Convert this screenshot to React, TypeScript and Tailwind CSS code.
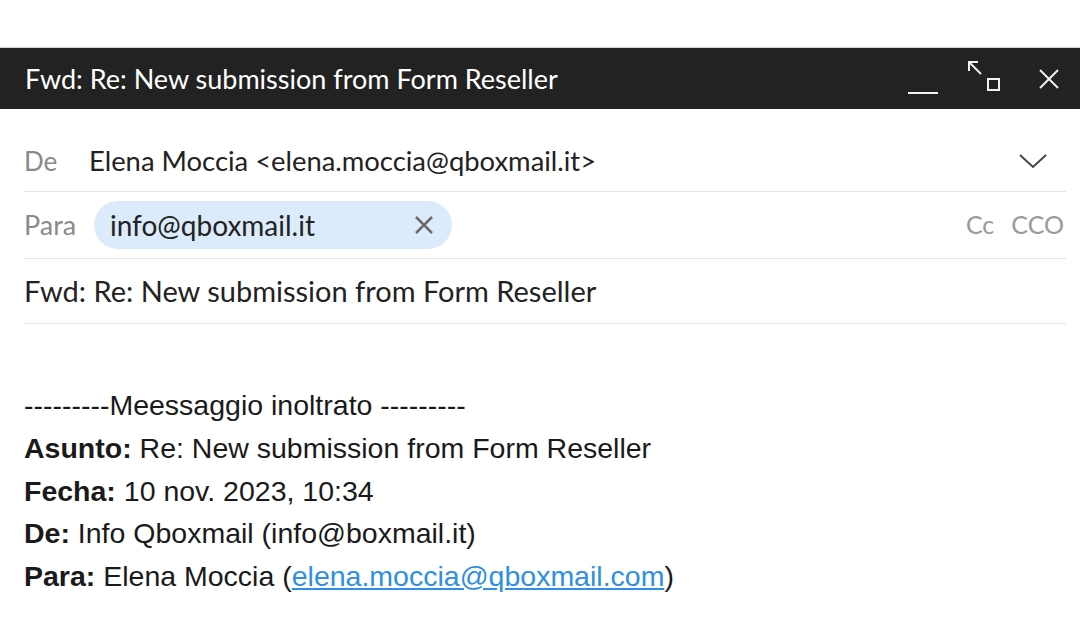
import React from "react";

const ui = { fontFamily: "Lato, 'Noto Sans', sans-serif" };
const body = { fontFamily: "'Liberation Sans', Arial, sans-serif" };

export default function App() {
  return (
    <div className="w-[1080px] h-[638px] bg-white overflow-hidden">
      <div className="h-[48px] bg-white border-b border-[#d4d4d4]" />
      <div className="h-[61px] bg-[#222222] flex items-center pl-[25px] pr-[20px]" style={ui}>
        <div className="text-[27px] text-white flex-1 leading-none">Fwd: Re: New submission from Form Reseller</div>
        <div className="flex items-center">
          <svg width="34" height="40" viewBox="0 0 34 40" className="mr-[28px]">
            <line x1="4" y1="34" x2="34" y2="34" stroke="#f2f2f2" strokeWidth="2" />
          </svg>
          <svg width="36" height="40" viewBox="0 0 36 40" className="mr-[36px]">
            <polyline points="3,12 3,3 12,3" fill="none" stroke="#f2f2f2" strokeWidth="2" />
            <line x1="3" y1="3" x2="15" y2="15" stroke="#f2f2f2" strokeWidth="2" />
            <rect x="22" y="20" width="11" height="11" fill="none" stroke="#f2f2f2" strokeWidth="2" />
          </svg>
          <svg width="22" height="22" viewBox="0 0 22 22">
            <line x1="2" y1="2" x2="20" y2="20" stroke="#f2f2f2" strokeWidth="2" />
            <line x1="20" y1="2" x2="2" y2="20" stroke="#f2f2f2" strokeWidth="2" />
          </svg>
        </div>
      </div>
      <div className="pl-[24px] pr-[14px]" style={ui}>
        <div className="h-[83px] pt-[22px] flex items-start border-b border-[#e6e6e6]">
          <div className="h-[60px] flex items-center w-full">
            <span className="text-[26px] text-[#8a8a8a] w-[65px]">De</span>
            <span className="text-[27.4px] text-[#222] flex-1">Elena Moccia &lt;elena.moccia@qboxmail.it&gt;</span>
            <svg width="30" height="18" viewBox="0 0 30 18" className="mr-[18px]">
              <polyline points="2,3 15,15 28,3" fill="none" stroke="#444" strokeWidth="2" />
            </svg>
          </div>
        </div>
        <div className="h-[67px] flex items-center border-b border-[#e6e6e6]">
          <span className="text-[27px] text-[#8a8a8a] w-[70px]">Para</span>
          <div className="h-[48px] w-[358px] rounded-full bg-[#dcebfb] flex items-center pl-[16px] pr-[18px]">
            <span className="text-[28px] text-[#222] flex-1">info@qboxmail.it</span>
            <svg width="20" height="20" viewBox="0 0 20 20">
              <line x1="2" y1="2" x2="18" y2="18" stroke="#6b6b6b" strokeWidth="2.5" />
              <line x1="18" y1="2" x2="2" y2="18" stroke="#6b6b6b" strokeWidth="2.5" />
            </svg>
          </div>
          <div className="flex-1" />
          <span className="text-[25px] text-[#9a9a9a] mr-[17px]">Cc</span>
          <span className="text-[25px] text-[#9a9a9a] mr-[2px]">CCO</span>
        </div>
        <div className="h-[65px] flex items-center border-b border-[#e6e6e6]">
          <span className="text-[29px] text-[#222]">Fwd: Re: New submission from Form Reseller</span>
        </div>
      </div>
      <div className="pl-[24px] pt-[60px] text-[28.5px] leading-[42.75px] text-[#1a1a1a]" style={body}>
        <div>---------Meessaggio inoltrato ---------</div>
        <div><b>Asunto:</b> Re: New submission from Form Reseller</div>
        <div><b>Fecha:</b> 10 nov. 2023, 10:34</div>
        <div><b>De:</b> Info Qboxmail (info@boxmail.it)</div>
        <div>
          <b>Para:</b> Elena Moccia (<span className="text-[#2f8fe0] underline">elena.moccia@qboxmail.com</span>)
        </div>
      </div>
    </div>
  );
}
